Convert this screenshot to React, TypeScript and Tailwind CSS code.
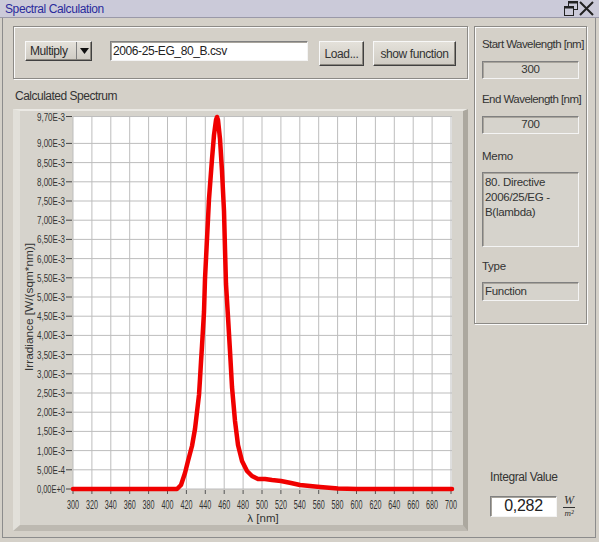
import React from "react";

const X0 = 73;
const Y0 = 490;
const xOf = (nm: number) => X0 + (nm - 300) * 0.945;
const yOf = (v: number) => Y0 - v * 38.4;

const WAVELENGTHS = Array.from({ length: 21 }, (_, i) => 300 + i * 20);
const TICKS = Array.from({ length: 19 }, (_, i) => i * 0.5);

const label = (v: number) => {
  if (v === 0) return "0,00E+0";
  if (v === 0.5) return "5,00E-4";
  return `${v.toFixed(2).replace(".", ",")}E-3`;
};

const CURVE: [number, number][] = [
  [73, 490], [177, 490], [181, 486], [185, 474], [188, 462], [192, 447], [195, 430],
  [197, 413], [199, 396], [200, 380], [201, 363], [202, 347], [203, 330], [204, 313],
  [205, 280], [207, 240], [209, 200], [212, 160], [214, 136], [216, 121], [217, 118],
  [218, 121], [220, 140], [222, 172], [224, 212], [225, 250], [226, 285], [228, 318],
  [230, 352], [232, 388], [235, 422], [238, 446], [242, 462], [247, 472], [252, 477],
  [258, 480], [265, 480], [272, 481], [281, 482], [291, 484], [300, 486], [310, 487],
  [320, 488], [338, 489.5], [357, 490], [452, 490],
];

function SpectrumChart() {
  return (
    <svg width={443} height={414} viewBox="20 112 443 414" className="block">
      <rect x={X0} y={117.5} width={379} height={372.5} fill="#ffffff" />
      {WAVELENGTHS.map((nm) => (
        <line key={`v${nm}`} x1={xOf(nm)} x2={xOf(nm)} y1={117.5} y2={490} stroke="#bdbdbd" strokeWidth={1} />
      ))}
      {[...TICKS, 9.7].map((v) => (
        <line key={`h${v}`} x1={X0} x2={452} y1={yOf(v)} y2={yOf(v)} stroke="#bdbdbd" strokeWidth={1} />
      ))}
      {[...TICKS, 9.7].map((v) => (
        <g key={`t${v}`}>
          <line x1={66} x2={72} y1={yOf(v)} y2={yOf(v)} stroke="#444" strokeWidth={1} />
          <text
            x={37}
            y={yOf(v) + 4}
            fontSize={11}
            textLength={28}
            lengthAdjust="spacingAndGlyphs"
            fill="#333"
            fontFamily="'Liberation Sans', Arial, sans-serif"
          >
            {v === 9.7 ? "9,70E-3" : label(v)}
          </text>
        </g>
      ))}
      {WAVELENGTHS.map((nm) => (
        <g key={`x${nm}`}>
          <line x1={xOf(nm)} x2={xOf(nm)} y1={491} y2={495} stroke="#555" strokeWidth={1} />
          <text
            x={xOf(nm)}
            y={510}
            fontSize={12.5}
            textAnchor="middle"
            textLength={12}
            lengthAdjust="spacingAndGlyphs"
            fill="#333"
            fontFamily="'Liberation Sans', Arial, sans-serif"
          >
            {nm}
          </text>
        </g>
      ))}
      <polyline
        points={CURVE.map(([x, y]) => `${x},${y}`).join(" ")}
        fill="none"
        stroke="#f00000"
        strokeWidth={4.5}
        strokeLinejoin="round"
        strokeLinecap="round"
      />
      <text
        x={263}
        y={523}
        fontSize={11.5}
        textAnchor="middle"
        fill="#333"
        fontFamily="'Liberation Sans', 'DejaVu Sans', sans-serif"
      >
        λ [nm]
      </text>
      <text
        transform="translate(33 308) rotate(-90)"
        fontSize={11.5}
        textAnchor="middle"
        textLength={128}
        lengthAdjust="spacingAndGlyphs"
        fill="#333"
        fontFamily="'Liberation Sans', Arial, sans-serif"
      >
        Irradiance [W/(sqm*nm)]
      </text>
    </svg>
  );
}

const sunken = "border border-t-[#808080] border-l-[#808080] border-b-[#f4f4f4] border-r-[#f4f4f4] shadow-[inset_1px_1px_0_#a8a49c]";
const raised = "border border-t-[#f8f8f8] border-l-[#f8f8f8] border-b-[#404040] border-r-[#404040] shadow-[inset_-1px_-1px_0_#8c8880] bg-gradient-to-b from-[#e4e1da] to-[#cfcbc3]";
const etched = "border border-[#8c8a86] shadow-[inset_1px_1px_0_#fafafa,1px_1px_0_#fafafa]";

function ReadOnlyField({ value, className = "" }: { value: string; className?: string }) {
  return (
    <div className={`${sunken} bg-[#d6d3cc] h-[18px] flex items-center text-[11.5px] tracking-[-0.3px] text-[#333] ${className}`}>
      {value}
    </div>
  );
}

function TitleBar() {
  return (
    <div className="h-[18px] bg-[#cbcad9] border-b border-[#9a99a8] flex items-center justify-between pl-[5px] pr-[4px]">
      <span className="text-[12px] tracking-[-0.4px] text-[#2a2a9c]">Spectral Calculation</span>
      <svg width={31} height={15} viewBox="0 0 31 15">
        <rect x={4.5} y={0.5} width={9} height={8} fill="none" stroke="#222" />
        <rect x={4.5} y={0.5} width={9} height={2} fill="#222" />
        <rect x={0.5} y={5.5} width={9} height={9} fill="#cbcad9" stroke="#222" />
        <rect x={0.5} y={5.5} width={9} height={2} fill="#222" />
        <path d="M16 1 L29 14 M29 1 L16 14" stroke="#222" strokeWidth={2} />
      </svg>
    </div>
  );
}

export default function App() {
  return (
    <div className="w-[599px] h-[542px] overflow-hidden bg-[#d4d0c8] font-['Liberation_Sans',Arial,sans-serif] text-[#2a2a2a]">
      <TitleBar />
      <div className="ml-[2px] mr-[3px] h-[520px] border-l border-r border-b border-[#8c8c8c] flex pl-[10px] pt-[8px]">
        <div className="w-[455px] flex flex-col">
          <div className={`${etched} h-[53px] flex items-start pt-[14px] pl-[11px]`}>
            <div className={`${raised} w-[67px] h-[20px] flex items-stretch`}>
              <span className="flex-1 text-[12px] tracking-[-0.4px] pl-[4px] flex items-center">Multiply</span>
              <span className="w-[15px] border-l border-[#808080] flex items-center justify-center">
                <svg width={9} height={6} viewBox="0 0 9 6"><path d="M0 0 H9 L4.5 6 Z" fill="#111" /></svg>
              </span>
            </div>
            <div className={`${sunken} ml-[18px] w-[198px] h-[20px] bg-white flex items-center pl-[2px] text-[12px] tracking-[-0.4px] text-[#222]`}>
              2006-25-EG_80_B.csv
            </div>
            <button className={`${raised} ml-[11px] w-[45px] h-[25px] text-[12px] tracking-[-0.4px] text-[#333]`}>Load...</button>
            <button className={`${raised} ml-[9px] w-[83px] h-[25px] text-[12px] tracking-[-0.4px] text-[#333]`}>show function</button>
          </div>
          <div className="mt-[10px] h-[14px] leading-[14px] pl-[2px] text-[12px] tracking-[-0.5px] text-[#333]">Calculated Spectrum</div>
          <div className="mt-[6px] h-[422px] bg-[#d6d3cc] border-t-2 border-l-[7px] border-b-[6px] border-r-[5px] border-t-[#ebe9e4] border-l-[#e2e0da] border-b-[#bdb9b1] border-r-[#aca89f]">
            <SpectrumChart />
          </div>
        </div>
        <div className="ml-[6px] w-[113px] flex flex-col">
          <div className={`${etched} h-[298px] flex flex-col px-[7px] pt-[10px]`}>
            <div className="h-[14px] leading-[14px] text-[11.5px] tracking-[-0.55px] text-[#333] whitespace-nowrap">Start Wavelength [nm]</div>
            <ReadOnlyField value="300" className="mt-[10px] justify-center" />
            <div className="mt-[13px] h-[14px] leading-[14px] text-[11.5px] tracking-[-0.55px] text-[#333] whitespace-nowrap">End Wavelength [nm]</div>
            <ReadOnlyField value="700" className="mt-[10px] justify-center" />
            <div className="mt-[15px] h-[14px] leading-[14px] text-[11.5px] tracking-[-0.3px] text-[#333]">Memo</div>
            <div className={`${sunken} mt-[9px] h-[75px] bg-[#d6d3cc] px-[2px] pt-[2px] text-[11.5px] leading-[15px] tracking-[-0.3px] text-[#333]`}>
              80. Directive
              <br />
              2006/25/EG -
              <br />
              B(lambda)
            </div>
            <div className="mt-[12px] h-[14px] leading-[14px] text-[11.5px] tracking-[-0.3px] text-[#333]">Type</div>
            <ReadOnlyField value="Function" className="mt-[9px] h-[19px] pl-[2px]" />
          </div>
          <div className="mt-auto pl-[16px] pb-[19px]">
            <div className="h-[14px] leading-[14px] text-[12px] tracking-[-0.4px] text-[#333]">Integral Value</div>
            <div className="mt-[10px] flex items-center">
              <div className={`${sunken} w-[67px] h-[21px] bg-white flex items-center justify-center text-[16px] tracking-[-0.3px] text-[#222]`}>
                0,282
              </div>
              <div className="ml-[6px] flex flex-col items-center font-['Liberation_Serif',serif] italic text-[#333] leading-none">
                <span className="text-[12px] px-[1px] border-b border-[#333] pb-[1px]">W</span>
                <span className="text-[9px] pt-[1px]">m²</span>
              </div>
            </div>
          </div>
        </div>
      </div>
      <div className="h-[4px] bg-[#d4d0c8]" />
    </div>
  );
}
